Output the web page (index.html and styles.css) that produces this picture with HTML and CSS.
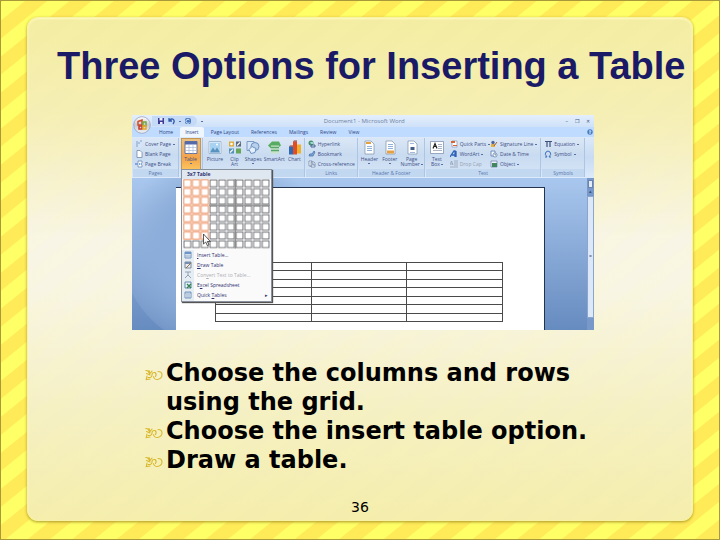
FILE: index.html
```html
<!DOCTYPE html>
<html lang="en">
<head>
<meta charset="utf-8">
<title>Three Options for Inserting a Table</title>
<link rel="stylesheet" href="styles.css">
</head>
<body>
<main class="slide">
  <h1>Three Options for Inserting a Table</h1>

  <section class="word" aria-label="Microsoft Word">
    <header class="titlebar">
      <div class="quick">
        <button aria-label="Save"><svg viewBox="0 0 8 8"><path fill="#3c3d96" d="M1 1h6v6H1z"/><path fill="#eef" d="M2.5 1h3v2.5h-3zM3 5h2.500v2H3z"/></svg></button>
        <button aria-label="Undo"><svg viewBox="0 0 8 8"><path d="M1 1v3h3M1.500 3.500C4 0 8 3 5 7" fill="none" stroke="#345cae" stroke-width="1.300"/></svg></button>
        <span class="arrow"></span>
        <button aria-label="Repeat"><svg viewBox="0 0 8 8"><rect x="1" y="1" width="6" height="6" rx="2" fill="#4777bd"/><path d="M5.500 3a2 2 0 1 0 0 2.500" fill="none" stroke="#dceaff"/></svg></button>
      </div>
      <span class="arrow"></span>
      <p class="doc-title">Document1 - Microsoft Word</p>
      <div class="window-buttons"><button>–</button><button>❐</button><button>✕</button></div>
    </header>
    <button class="office" aria-label="Office"><svg viewBox="0 0 18 18"><defs><linearGradient id="orb" x2="0" y2="1"><stop stop-color="#fff"/><stop offset=".5" stop-color="#c6c9d3"/><stop offset="1" stop-color="#f4f4f5"/></linearGradient></defs><circle cx="9" cy="9" r="8.300" fill="url(#orb)" stroke="#8e9ab3" stroke-width=".7"/><g fill="none" stroke-width="1.500"><path d="M5 5.500 9 4v5H5z" stroke="#d14e28"/><path d="M10 6h3v4h-3z" stroke="#72a83c"/><path d="M6 10h3v3H6z" stroke="#c33c2e"/><path d="M10 10h3v3h-3z" stroke="#e5a92c"/></g></svg></button>
    <nav class="tabs">
      <button>Home</button><button class="active">Insert</button><button>Page Layout</button><button>References</button><button>Mailings</button><button>Review</button><button>View</button>
      <button class="help" aria-label="Help"><svg viewBox="0 0 6 6"><circle cx="3" cy="3" r="2.700" fill="#477dc3"/><path d="M2 2.300q1-1.300 2 0L3 3.500V5" fill="none" stroke="#fff" stroke-width=".8"/></svg></button>
    </nav>

    <div class="ribbon">
      <section class="group">
        <div class="tools list">
          <button><svg viewBox="0 0 8 8"><path d="M2 1h5v6H2z" fill="#d5e5f8"/><path d="M2 1v6M3 3h2M5 1h2" stroke="#718dbb" stroke-width=".8"/></svg>Cover Page<i class="arrow"></i></button>
          <button><svg viewBox="0 0 8 8"><path d="M2 .5h3l2 2v5H2z" fill="#fff" stroke="#637da4" stroke-width=".7"/></svg>Blank Page</button>
          <button><svg viewBox="0 0 8 8"><path d="M3 3V1h4v2M3 5v2h4V5" fill="#fff" stroke="#7189af" stroke-width=".8"/><path d="M0 4h3M4 4h1M6 4h1" stroke="#386bb2"/></svg>Page Break</button>
        </div>
        <h2>Pages</h2>
      </section>
      <section class="group tables">
        <div class="tools large">
          <button class="pressed"><svg viewBox="0 0 14 14"><path d="M1 1h12v12H1z" fill="#fff" stroke="#6673a0"/><path d="M1 1h12v3H1z" fill="#5369a9"/><path d="M1 7h12M1 10h12M5 4v9M9 4v9" stroke="#a6b8d9" stroke-width=".7"/></svg><span>Table</span><i class="arrow"></i></button>
        </div>
      </section>
      <section class="group">
        <div class="tools large five">
          <button><svg viewBox="0 0 14 14"><path d="M1 1h12v12H1z" fill="#fff" stroke="#a2b8d3"/><path d="M2 2h10v10H2z" fill="#a7d2f2"/><path d="m2 12 3-5 2 3 2-3 3 5z" fill="#5b92bd"/><circle cx="9" cy="4" r="1" fill="#fff"/></svg>Picture</button>
          <button><svg viewBox="0 0 14 14"><path d="M1 1h5v5H1z" fill="#dcad39"/><path d="M8 1h5v5H8z" fill="#57677e"/><path d="M1 8h5v5H1z" fill="#4f93bd"/><path d="M8 8h5v5H8z" fill="#66a55a"/><path d="m9 5 3-3M2 12l3-3" stroke="#f4eee0" stroke-width="1.500"/><circle cx="3.500" cy="3.500" r="1.300" fill="#fff"/></svg>Clip<br>Art</button>
          <button><svg viewBox="0 0 14 14"><path d="M1 1h7v9H1z" fill="#d5e5f7" stroke="#7d9bc7"/><circle cx="9" cy="6" r="4" fill="#b7d0ed" stroke="#6e91c1"/><path d="m6 6 4 2-1 4-4 1-2-4z" fill="#e3effa" stroke="#6e91c1"/></svg>Shapes<i class="arrow"></i></button>
          <button><svg viewBox="0 0 14 14"><path d="M1 5 5 1h7l2 4-4 3H4z" fill="#58ac62"/><path d="M4 5h8v8H4z" fill="#c7e3c7"/><path d="M4 7h8M4 10h8" stroke="#57a469" stroke-width="1.500"/></svg>SmartArt</button>
          <button><svg viewBox="0 0 14 14"><path d="M1 6h4v8H1z" fill="#2d69b4"/><path d="M5 1h4v13H5z" fill="#df4e25"/><path d="M9 4h4v9H9z" fill="#efb12d"/><path d="m1 6 1-1h3v1M5 1l1-1h3v1" fill="#913d30"/></svg>Chart</button>
        </div>
        <h2>Illustrations</h2>
      </section>
      <section class="group">
        <div class="tools list">
          <button><svg viewBox="0 0 8 8"><circle cx="3" cy="3" r="2.500" fill="#439269"/><path d="M2 2h3v2H3z" fill="#9fd3da"/><path d="M3 5h4v2H3z" fill="none" stroke="#4c6394"/></svg>Hyperlink</button>
          <button><svg viewBox="0 0 8 8"><path d="M1 6q0-3 3-2l2-3 1 1-2 4z" fill="#82a7d3" stroke="#406baa" stroke-width=".7"/></svg>Bookmark</button>
          <button><svg viewBox="0 0 8 8"><path d="M1 1h3v5H1zM3 2h3l1 1v4H3z" fill="#fff" stroke="#687d9d" stroke-width=".7"/><path d="M4 4h2v2" fill="none" stroke="#3766ac" stroke-width=".7"/></svg>Cross-reference</button>
        </div>
        <h2>Links</h2>
      </section>
      <section class="group">
        <div class="tools large three">
          <button><svg viewBox="0 0 14 14"><path d="M3 .5h6l3 3v10H3z" fill="#fff" stroke="#7e8fa8" stroke-width=".7"/><path d="M4 1.500h5v2H4z" fill="#e4a144"/><path d="M5 6h5M5 8h5M5 10h5" stroke="#8eb2dc"/></svg>Header<i class="arrow"></i></button>
          <button><svg viewBox="0 0 14 14"><path d="M3 .5h6l3 3v10H3z" fill="#fff" stroke="#7e8fa8" stroke-width=".7"/><path d="M4 10h7v3H4z" fill="#e4a144"/><path d="M5 4h5M5 6h5M5 8h5" stroke="#8eb2dc"/></svg>Footer<i class="arrow"></i></button>
          <button><svg viewBox="0 0 14 14"><path d="M3 .5h6l3 3v10H3z" fill="#fff" stroke="#7e8fa8" stroke-width=".7"/><path d="M5 3h4M5 12h5" stroke="#9cbbe0"/><path d="M5.500 6.500h4v3h-4z" fill="#445d86"/></svg>Page<br>Number<i class="arrow inline"></i></button>
        </div>
        <h2>Header &amp; Footer</h2>
      </section>
      <section class="group">
        <div class="tools text-tools">
          <div class="large">
            <button><svg viewBox="0 0 14 14"><path d="M.5 1h13v12H.5z" fill="#fff" stroke="#7488a9" stroke-width=".7"/><path d="m3 8 2-5 2 5M4 6h2" fill="none" stroke="#222" stroke-width="1.200"/><path d="M8 4h4M8 6h4M8 8h4M3 10h9" stroke="#8494ad" stroke-width=".7"/></svg>Text<br>Box<i class="arrow inline"></i></button>
          </div>
          <div class="list">
            <button><svg viewBox="0 0 8 8"><path d="M2 1h5v6H2z" fill="#fff" stroke="#7588a4" stroke-width=".6"/><path d="M1 1h4v2H1zM3 5h4v1H3z" fill="#d96533"/></svg>Quick Parts<i class="arrow"></i></button>
            <button><svg viewBox="0 0 8 8"><path d="m0 7 4-6h1v6M2 5h3M6 1v6" fill="none" stroke="#2d62b9" stroke-width="1.300"/></svg>WordArt<i class="arrow"></i></button>
            <button class="disabled" disabled><svg viewBox="0 0 8 8"><path d="m0 5 1.500-4L3 5M1 4h2M4 1h4M4 3h4M4 5h4M0 7h8" fill="none" stroke="#8d98ab" stroke-width=".7"/></svg>Drop Cap</button>
          </div>
          <div class="list">
            <button><svg viewBox="0 0 8 8"><path d="M1 7V4h4v3z" fill="#e1b148"/><circle cx="3" cy="2.500" r="1.700" fill="#4d6898"/><path d="m4 6 3-4" stroke="#a55e33"/></svg>Signature Line<i class="arrow"></i></button>
            <button><svg viewBox="0 0 8 8"><path d="M1 1h4v5H1z" fill="#eff6ff" stroke="#4d6ca0" stroke-width=".7"/><circle cx="5" cy="5" r="2" fill="#fff" stroke="#5078a9" stroke-width=".7"/><path d="M5 4v1h1" fill="none" stroke="#345" stroke-width=".6"/></svg>Date &amp; Time</button>
            <button><svg viewBox="0 0 8 8"><path d="M1 1h6v6H1z" fill="#eef" stroke="#576d94" stroke-width=".6"/><path d="M2 3h5v4H2z" fill="#44865e"/></svg>Object<i class="arrow"></i></button>
          </div>
        </div>
        <h2>Text</h2>
      </section>
      <section class="group">
        <div class="tools list">
          <button><svg viewBox="0 0 8 8"><path d="M1 1.500h7M3 2v5M6 2v5" fill="none" stroke="#3c527d" stroke-width="1.200"/></svg>Equation<i class="arrow"></i></button>
          <button><svg viewBox="0 0 8 8"><path d="M1 7h2Q0 4 2 2q2-2 4 0t-1 5h2" fill="none" stroke="#3f73bc"/></svg>Symbol<i class="arrow"></i></button>
        </div>
        <h2>Symbols</h2>
      </section>
    </div>

    <div class="workspace">
      <div class="paper">
        <table aria-label="Three columns and seven rows">
          <tr><td></td><td></td><td></td></tr><tr><td></td><td></td><td></td></tr><tr><td></td><td></td><td></td></tr><tr><td></td><td></td><td></td></tr><tr><td></td><td></td><td></td></tr><tr><td></td><td></td><td></td></tr><tr><td></td><td></td><td></td></tr>
        </table>
      </div>
      <div class="scrollbar"><span class="ruler"></span><span class="up">▴</span><span class="thumb">=</span></div>
    </div>

    <div class="menu">
      <h3>3x7 Table</h3>
      <svg class="picker" viewBox="0 0 87 70" preserveAspectRatio="none" role="img" aria-label="Table size: 3 columns by 7 rows">
        <defs>
          <pattern id="cell" width="8.700" height="8.700" patternUnits="userSpaceOnUse"><rect x="1" y="1" width="6.700" height="6.700" fill="#fff" stroke="#55575c" stroke-width=".8"/></pattern>
          <pattern id="chosen" width="8.700" height="8.700" patternUnits="userSpaceOnUse"><rect x=".8" y=".8" width="7.100" height="7.100" fill="#fff" stroke="#ec9468" stroke-width="1"/></pattern>
        </defs>
        <path fill="url(#cell)" d="M0 0h87v69.600H0z"/><path fill="#fff" d="M0 0h26.100v60.900H0z"/><path fill="url(#chosen)" d="M0 0h26.100v60.900H0z"/>
        <path d="M26 26.100h61M52.200 0v69.600" stroke="#888" stroke-width="1.400"/>
        <path d="M20.500 55v10l2.200-2 1.600 3.500 1.700-.8-1.700-3.200h3z" fill="#fff" stroke="#333" stroke-width=".8"/>
      </svg>
      <div class="commands">
        <button><svg viewBox="0 0 8 8"><path d="M1 1h6v6H1z" fill="#fff" stroke="#577dad" stroke-width=".8"/><path d="M1 1h6v2H1z" fill="#6d95c8"/><path d="M1 5h6M3 3v4M5 3v4" stroke="#7899c4" stroke-width=".6"/></svg><span><u>I</u>nsert Table...</span></button>
        <button><svg viewBox="0 0 8 8"><path d="M1 1h6v6H1z" fill="#e6edf7" stroke="#656f82" stroke-width=".8"/><path d="M1 1h6v2H1z" fill="#768eaf"/><path d="m2 7 5-5" stroke="#927343"/></svg><span><u>D</u>raw Table</span></button>
        <button class="disabled" disabled><svg viewBox="0 0 8 8"><path d="M1 1h6M4 1v3M1 7l3-3 3 3" fill="none" stroke="#8ea1b7"/></svg><span>Con<u>v</u>ert Text to Table...</span></button>
        <button><svg viewBox="0 0 8 8"><path d="M1 1h6v6H1z" fill="#e9f3ff" stroke="#447198" stroke-width=".8"/><path d="m3 3 4 4M7 3 3 7" stroke="#318248" stroke-width="1.300"/></svg><span>E<u>x</u>cel Spreadsheet</span></button>
        <button><svg viewBox="0 0 8 8"><path d="M1 1h6v6H1z" fill="#fff" stroke="#577dad" stroke-width=".8"/><path d="M1 2h6M3 3v4M5 3v4" stroke="#7899c4"/></svg><span>Quick <u>T</u>ables</span><i class="submenu">▸</i></button>
      </div>
    </div>
  </section>

  <ul class="points">
    <li><svg viewBox="0 0 18 12"><use href="#flourish"/></svg>Choose the columns and rows using the grid.</li>
    <li><svg viewBox="0 0 18 12"><use href="#flourish"/></svg>Choose the insert table option.</li>
    <li><svg viewBox="0 0 18 12"><use href="#flourish"/></svg>Draw a table.</li>
  </ul>
  <footer>36</footer>
</main>
<svg class="symbols" aria-hidden="true"><symbol id="flourish" viewBox="0 0 18 12"><path d="M.8 1.500Q3 1 4.500 4.500M4 1.500l1 3 2-2.500M1.500 4.500 5 6M2 7 1.200 10.500 5 10M3 8.500Q7 9 7 6T10 3.500Q12 5 10.500 7.500M13 2.500Q17 2.500 17 6t-4.500 4.500Q9 10.500 8.500 7.500" fill="none" stroke="#d8b82f" stroke-width="1.100" stroke-linecap="round"/></symbol></svg>
</body>
</html>
```
FILE: styles.css
```css
* { box-sizing: border-box; }

body {
  margin: 0;
  min-height: 100vh;
  display: flex;
  padding: 16px 26px 18px;
  border: 1px solid #a89a3a;
  background: repeating-linear-gradient(141deg, #ffea58 0 2px, #ffff66 3px 16px, #ffea58 17px 28px);
  font-family: "DejaVu Sans", Verdana, sans-serif;
}

h1, h2, h3, p, ul { margin: 0; padding: 0; }

button {
  margin: 0;
  padding: 0;
  border: 0;
  background: none;
  color: inherit;
  font: inherit;
}

svg { display: block; flex: none; }
.symbols { display: none; }

.slide {
  flex: 1;
  display: flex;
  flex-direction: column;
  min-width: 0;
  border: 1px solid #f8f2a2;
  border-radius: 11px;
  background:
    repeating-linear-gradient(141deg, #fff0 0 2px, #ffffb014 3px 16px, #fff0 17px 28px),
    linear-gradient(#f3eda2, #f5eeb6 20%, #f8f5e6 44%, #f8f5e4 54%, #f5f0c4 78%, #f4edac);
  box-shadow: 0 1px 3px #a9972a, inset 0 1px 2px #fffbc0;
}

h1 {
  padding: 26px 0 0 29px;
  color: #1a1a66;
  font: bold 38px/44px "Liberation Sans", Arial, sans-serif;
  white-space: nowrap;
}

/* Word window */
.word {
  position: relative;
  margin: 27px 98px 0 104px;
  background: #bfdbff;
  color: #3d4f86;
  font: 5px/6px "Open Sans", sans-serif;
}

.titlebar {
  display: flex;
  align-items: center;
  gap: 4px;
  height: 12px;
  padding-left: 20px;
  background: linear-gradient(#e4effd, #cfe1f8);
}

.quick {
  display: flex;
  align-items: center;
  gap: 3px;
  height: 10px;
  padding: 0 5px;
  border-radius: 0 6px 6px 0;
  background: #c5daf6;
}
.quick svg { width: 8px; height: 8px; }

.arrow {
  display: inline-block;
  flex: none;
  width: 2px;
  height: 1px;
  background: #5870a0;
}

.doc-title { flex: 1; padding-right: 40px; text-align: center; color: #6b7fa4; font-size: 6px; }
.window-buttons { display: flex; gap: 7px; padding-right: 4px; color: #45577d; }

.office { position: absolute; top: 1px; left: 1px; }
.office svg { width: 18px; height: 18px; }

.tabs {
  display: flex;
  height: 10px;
  padding-left: 22px;
  background: #bfdbff;
  color: #2f4784;
}
.tabs button { padding: 0 5px; margin-right: 2px; }
.tabs .active { border-radius: 2px 2px 0 0; background: #f0f6fe; }
.tabs .help { margin: 0 0 0 auto; padding: 0 1px; }
.help svg { width: 6px; height: 6px; }

.ribbon {
  display: grid;
  grid-template-columns: 46fr 23fr 102fr 52fr 67fr 116fr 43fr;
  gap: 1px;
  height: 41px;
  padding: 1px 9px 1px 1px;
  background: linear-gradient(#dce9f9, #c8dbf2 50%, #dceafb);
}

.group {
  display: flex;
  flex-direction: column;
  min-width: 0;
  border-right: 1px solid #adc5e4;
  background: linear-gradient(#dbe7f6, #c9dbf0 45%, #d6e6f8);
}
.group h2 {
  height: 8px;
  background: #c2d8f1;
  color: #5876ac;
  font: inherit;
  line-height: 8px;
  text-align: center;
}
.tools { flex: 1; min-height: 0; padding-top: 1px; }
.list button {
  display: flex;
  align-items: center;
  gap: 2px;
  height: 10px;
  padding-left: 2px;
  white-space: nowrap;
}
.list svg { width: 8px; height: 8px; }
.large { display: grid; text-align: center; }
.large button { align-self: start; padding-top: 1px; line-height: 5px; }
.large svg { width: 14px; height: 15px; margin: 0 auto 2px; }
.large .arrow { display: block; margin: 1px auto; }
.large .inline { display: inline-block; margin: 0 0 1px 1px; }
.five { grid-template-columns: 23fr 17fr 21fr 22fr 19fr; }
.three { grid-template-columns: 22fr 19fr 25fr; }
.text-tools { display: grid; grid-template-columns: 22fr 41fr 53fr; }
.text-tools .large, .text-tools .list { min-width: 0; }
.tables .tools { padding: 0; }
.large .pressed {
  display: flex;
  flex-direction: column;
  justify-content: flex-start;
  align-self: stretch;
  align-items: center;
  margin: 0 1px;
  padding-top: 1px;
  border: 1px solid #c49654;
  background: linear-gradient(#eac184, #f4a34a 50%, #ffd76b);
}
.disabled { color: #98a0b0; }

.workspace {
  display: flex;
  height: 152px;
  padding-left: 44px;
  background: radial-gradient(circle at 90px 70px, #8cadd9 0 60px, #a5c2e933 100px, #fff0 101px), linear-gradient(#a9c7ee, #668bbf);
}
.paper {
  flex: 1;
  margin-top: 9px;
  padding: 74px 41px 0 39px;
  border: solid #25344e;
  border-width: 1px 1px 0 0;
  background: #fff;
}
table { width: 100%; height: 60px; border-collapse: collapse; table-layout: fixed; }
td { padding: 0; border: 1px solid #4a4a4a; }

.scrollbar {
  display: flex;
  flex-direction: column;
  width: 7px;
  margin-left: 42px;
  padding-bottom: 12px;
  background: #7798c9;
  color: #394e79;
  text-align: center;
}
.ruler { height: 8px; margin: 2px 1px 0; border: 1px solid #6e83ab; background: #e2ecf9; }
.up { height: 8px; }
.thumb { flex: 1; border: 1px solid #8ba5ce; background: #dce8f8; line-height: 118px; }

/* Table drop-down */
.menu {
  position: absolute;
  top: 54px;
  left: 49px;
  width: 91px;
  border: 1px solid #8a919e;
  background: #fafafa;
  box-shadow: 1px 1px 1px #555;
  color: #30306f;
}
.menu h3 { height: 9px; padding-left: 5px; background: #dfe7f1; font: bold 5px/9px "Open Sans", sans-serif; }
.picker { width: 87px; height: 70px; margin: 0 1px 1px; }
.commands { padding-bottom: 1px; background: linear-gradient(to right, #e5edf3 12px, #fafafa 12px); }
.commands button {
  display: flex;
  align-items: center;
  gap: 5px;
  width: 100%;
  height: 10px;
  padding-left: 2px;
  white-space: nowrap;
}
.commands svg { width: 8px; height: 8px; }
.commands .disabled { color: #adadb5; }
.submenu { margin-left: auto; padding-right: 3px; font-style: normal; }

/* Slide text */
.points {
  padding: 29px 98px 0 138px;
  list-style: none;
  color: #000;
  font-size: 24px;
  font-weight: bold;
  line-height: 29px;
}
.points li { position: relative; }
.points svg { position: absolute; left: -21px; top: 10px; width: 18px; height: 12px; }

footer { margin-top: auto; padding-bottom: 5px; text-align: center; font-size: 14px; line-height: 16px; }
```
